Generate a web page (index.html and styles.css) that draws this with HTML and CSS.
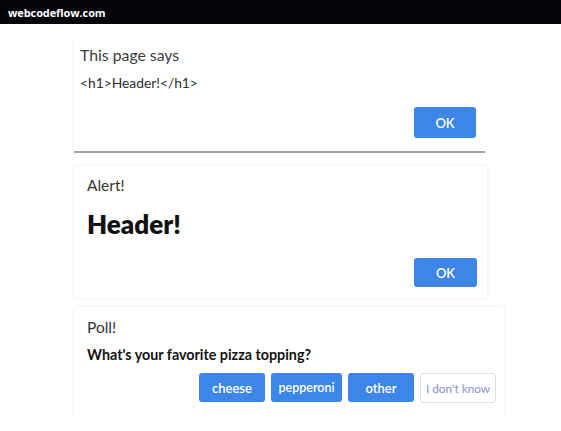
FILE: index.html
```html
<!DOCTYPE html>
<html>
<head>
<meta charset="utf-8">
<link rel="stylesheet" href="styles.css">
</head>
<body>
<div class="topbar"><span class="brand">webcodeflow.com</span></div>
<div class="stack">
  <div class="card card-native">
    <div class="native-title">This page says</div>
    <div class="native-msg">&lt;h1&gt;Header!&lt;/h1&gt;</div>
    <div class="actions"><button class="btn btn-ok">OK</button></div>
  </div>
  <div class="card card-alert">
    <div class="card-title">Alert!</div>
    <h1 class="alert-h1">Header!</h1>
    <div class="actions"><button class="btn btn-ok">OK</button></div>
  </div>
  <div class="card card-poll">
    <div class="card-title">Poll!</div>
    <div class="question">What's your favorite pizza topping?</div>
    <div class="actions poll-actions">
      <button class="btn btn-opt btn-cheese">cheese</button>
      <button class="btn btn-opt btn-pep">pepperoni</button>
      <button class="btn btn-opt btn-other">other</button>
      <button class="btn btn-ghost">I don't know</button>
    </div>
  </div>
</div>
</body>
</html>
```
FILE: styles.css
```css
* { box-sizing: border-box; }
html, body { margin: 0; padding: 0; background: #fff; }
body { font-family: Lato, "Open Sans", sans-serif; color: #333; }

.topbar {
  height: 24px;
  background: #050509;
  display: flex;
  align-items: center;
  padding-left: 8px;
}
.brand {
  color: #fff;
  font-family: "Open Sans", "DejaVu Sans", sans-serif;
  font-weight: 700;
  font-size: 11px;
  letter-spacing: -0.1px;
}

.stack {
  display: flex;
  flex-direction: column;
  align-items: flex-start;
  padding-left: 74px;
  padding-top: 13px;
}

.card {
  background: #fff;
  box-shadow: 0 0 4px rgba(0,0,0,0.08);
}

.card-native {
  width: 411px;
  height: 116px;
  padding: 8px 9px 0 6px;
  border-bottom: 2px solid #a4a4a4;
  box-shadow: -2px 0 3px rgba(0,0,0,0.04);
}
.native-title { font-size: 15.8px; line-height: 20px; color: #3b3b44; }
.native-msg { font-size: 13.8px; line-height: 16px; margin-top: 10px; color: #2c2c2c; }
.card-native .actions { margin-top: 16px; }

.actions { display: flex; justify-content: flex-end; gap: 6px; }

.btn {
  font-family: Lato, "Open Sans", sans-serif;
  border: none;
  border-radius: 3px;
  font-size: 13px;
  cursor: pointer;
  padding: 0;
}
.btn-ok {
  width: 62px;
  height: 31px;
  background: #3d85e6;
  color: #fff;
  font-weight: 600;
}

.card-alert {
  width: 413px;
  height: 132px;
  margin-top: 13px;
  padding: 10px 10px 0 13px;
}
.card-title { font-size: 15.5px; line-height: 19px; color: #333; }
.alert-h1 {
  margin: 13px 0 0;
  font-size: 26px;
  line-height: 32px;
  font-weight: 800;
  color: #111;
}
.card-alert .actions { margin-top: 18px; }
.card-alert .btn-ok { width: 63px; height: 29px; }

.card-poll {
  width: 430px;
  height: 108px;
  margin-top: 9px;
  padding: 11px 8px 0 13px;
}
.question {
  margin-top: 10px;
  font-size: 14.3px;
  line-height: 16px;
  font-weight: 700;
  color: #111;
}
.poll-actions { margin-top: 10px; }
.btn-opt {
  height: 29px;
  background: #3d85e6;
  color: #fff;
  font-weight: 600;
}
.btn-cheese { width: 66px; }
.btn-pep { width: 71px; font-size: 12.5px; }
.btn-other { width: 66px; }
.btn-ghost {
  width: 76px;
  height: 30px;
  background: #fff;
  border: 1px solid #dedee6;
  color: #8c92d6;
  font-weight: 400;
  font-size: 11.8px;
}
```
